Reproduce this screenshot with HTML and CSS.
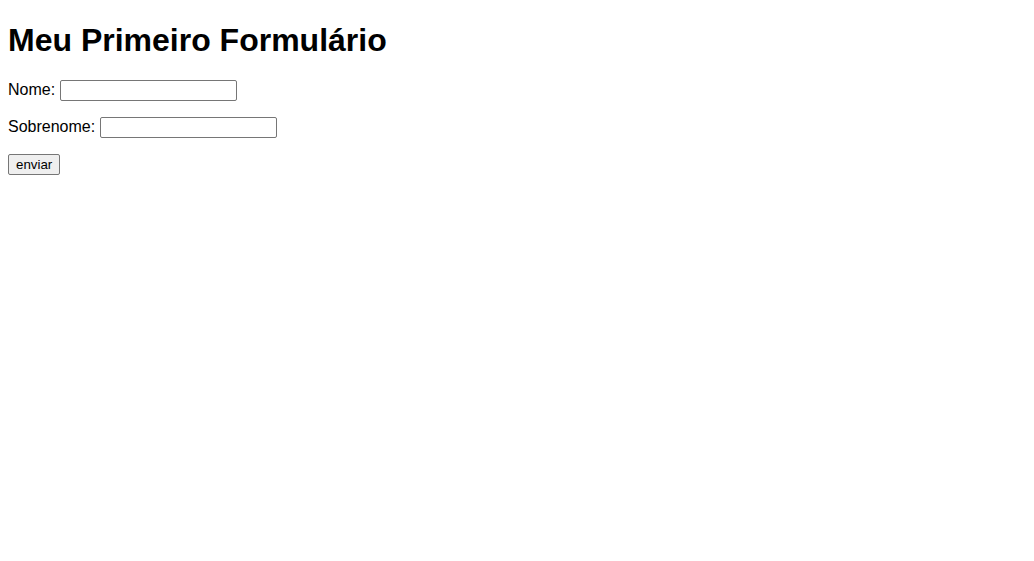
FILE: index.html
```html
<!DOCTYPE html>
<html lang="pt-BR">
<head>
<meta charset="utf-8">
<title>Meu Primeiro Formulário</title>
<link rel="stylesheet" href="styles.css">
</head>
<body class="page">
<h1 class="title">Meu Primeiro Formulário</h1>
<form class="form">
<p class="row"><label for="nome">Nome:</label> <input class="field" type="text" id="nome" name="nome"></p>
<p class="row"><label for="sobrenome">Sobrenome:</label> <input class="field" type="text" id="sobrenome" name="sobrenome"></p>
<p class="row"><button class="btn" type="submit">enviar</button></p>
</form>
</body>
</html>
```
FILE: styles.css
```css
.page {
  margin: 8px;
  font-family: "Liberation Sans", Arial, sans-serif;
  font-size: 16px;
  color: #000;
  background: #fff;
}
.title {
  font-size: 32px;
  font-weight: bold;
  margin: 14px 0 21px;
}
.row {
  margin: 16px 0;
}
.field {
  font-family: "Liberation Sans", Arial, sans-serif;
  font-size: 13.333px;
  width: 177px;
  height: 21px;
  box-sizing: border-box;
  border: 1px solid #767676;
  border-radius: 2px;
  padding: 1px 2px;
  background: #fff;
}
.btn {
  font-family: "Liberation Sans", Arial, sans-serif;
  font-size: 13.333px;
  height: 21px;
  box-sizing: border-box;
  padding: 1px 7px;
  border: 1px solid #767676;
  border-radius: 2px;
  background: #efefef;
  color: #000;
}
```
